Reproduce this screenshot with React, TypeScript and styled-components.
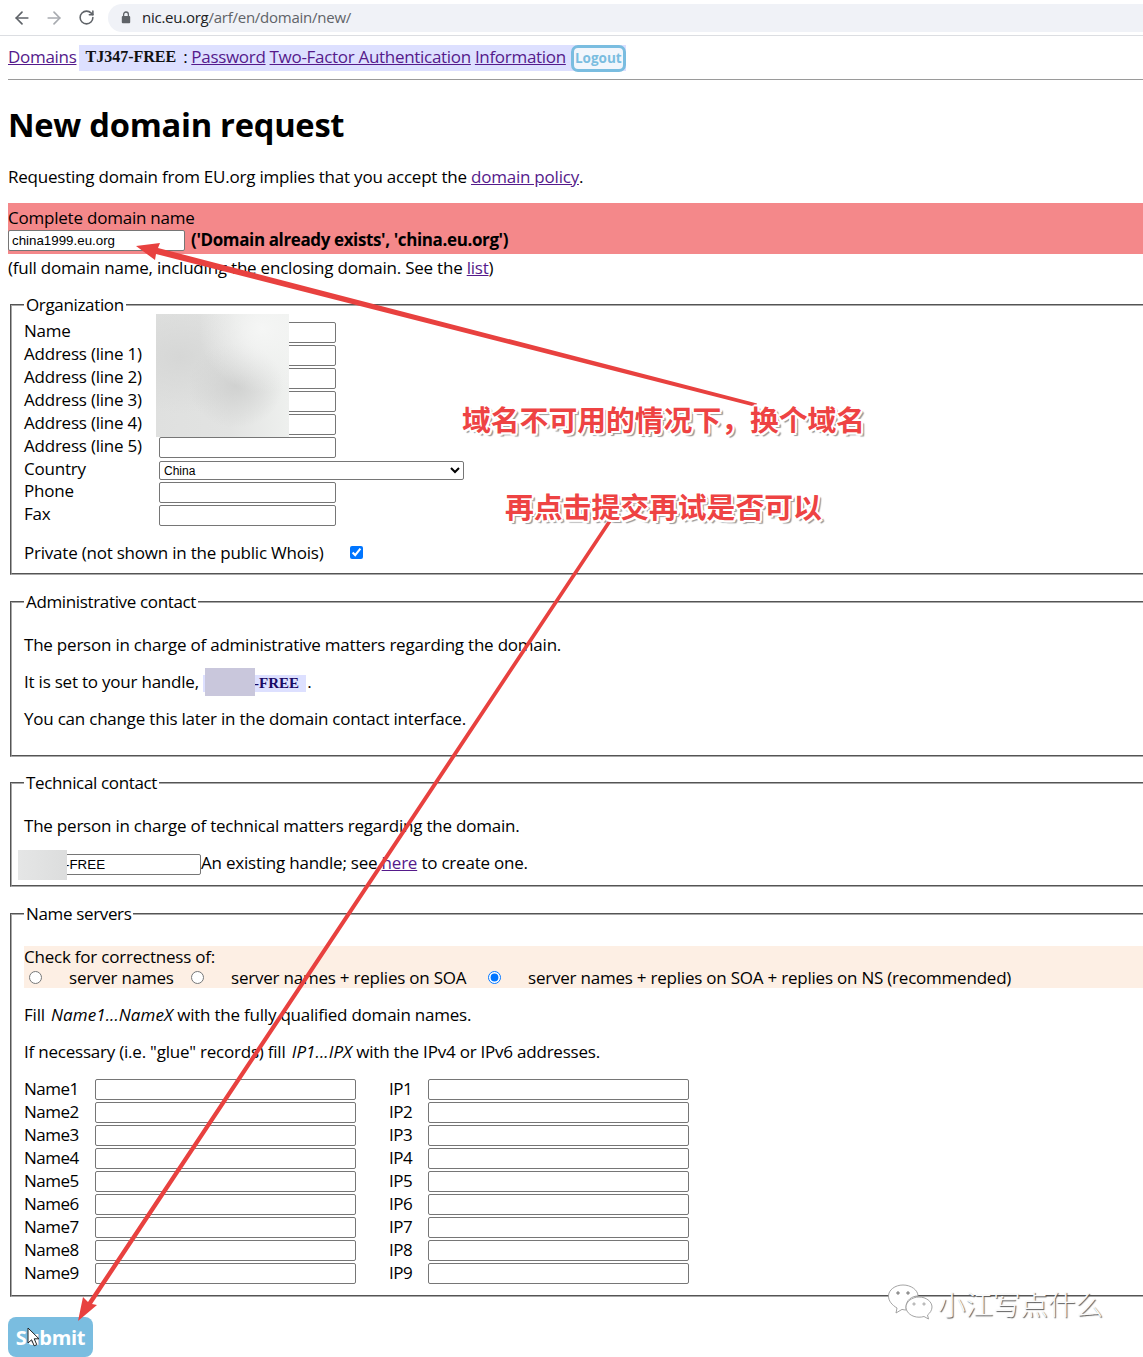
import { FC } from 'react';
import styled, { createGlobalStyle } from 'styled-components';
import { ArrowLeft, ArrowRight, RotateCw } from 'lucide-react';

const GlobalStyle = createGlobalStyle`
    html, body {
        margin: 0;
        padding: 0;
        background: #fff;
    }
    body {
        font-family: 'Open Sans', 'Noto Sans', sans-serif;
        font-size: 17px;
        line-height: 23px;
        letter-spacing: -0.22px;
        color: #000;
    }
`;

const orgLabels = ['Name', 'Address (line 1)', 'Address (line 2)', 'Address (line 3)', 'Address (line 4)', 'Address (line 5)'];
const nsRows = [1, 2, 3, 4, 5, 6, 7, 8, 9];

const App: FC = () => {
    return (
        <Viewport>
            <GlobalStyle />
            <Toolbar>
                <NavIcon><ArrowLeft size={20} strokeWidth={2} /></NavIcon>
                <NavIcon $off><ArrowRight size={20} strokeWidth={2} /></NavIcon>
                <NavIcon><RotateCw size={17} strokeWidth={2.2} /></NavIcon>
                <UrlBar>
                    <svg width='10' height='13' viewBox='0 0 10 13'>
                        <path d='M2.6 5V3.4a2.4 2.4 0 0 1 4.8 0V5' fill='none' stroke='#5f6368' strokeWidth='1.3' />
                        <rect x='0.8' y='5' width='8.4' height='7.2' rx='1' fill='#5f6368' />
                    </svg>
                    <UrlText>nic.eu.org<span>/arf/en/domain/new/</span></UrlText>
                </UrlBar>
            </Toolbar>

            <Page>
                <TopNav>
                    <a href='#'>Domains</a>
                    <UserBar>
                        <Handle>TJ347-FREE</Handle>
                        <Colon>:</Colon>
                        <a href='#'>Password</a>
                        <a href='#'>Two-Factor Authentication</a>
                        <a href='#'>Information</a>
                        <LogoutButton>Logout</LogoutButton>
                    </UserBar>
                </TopNav>
                <Rule />
                <Title>New domain request</Title>
                <Intro>
                    Requesting domain from EU.org implies that you accept the <a href='#'>domain policy</a>.
                </Intro>

                <ErrorBlock>
                    <div>Complete domain name</div>
                    <ErrorRow>
                        <TextInput $width={177} defaultValue='china1999.eu.org' />
                        <b>('Domain already exists', 'china.eu.org')</b>
                    </ErrorRow>
                </ErrorBlock>
                <Hint>
                    (full domain name, including the enclosing domain. See the <a href='#'>list</a>)
                </Hint>

                <Group $gap={14} $pb={9}>
                    <legend>Organization</legend>
                    <FormGrid>
                        {orgLabels.map((label) => (
                            <FormRow key={label}>
                                <span>{label}</span>
                                <TextInput $width={177} />
                            </FormRow>
                        ))}
                        <FormRow $h={22}>
                            <span>Country</span>
                            <CountrySelect defaultValue='China'>
                                <option>China</option>
                            </CountrySelect>
                        </FormRow>
                        <FormRow>
                            <span>Phone</span>
                            <TextInput $width={177} />
                        </FormRow>
                        <FormRow>
                            <span>Fax</span>
                            <TextInput $width={177} />
                        </FormRow>
                    </FormGrid>
                    <PrivateRow>
                        <span>Private (not shown in the public Whois)</span>
                        <input type='checkbox' defaultChecked />
                    </PrivateRow>
                </Group>

                <Group $gap={15}>
                    <legend>Administrative contact</legend>
                    <Note $top={16}>The person in charge of administrative matters regarding the domain.</Note>
                    <Note>
                        It is set to your handle, <InlineHandle>TJ347-FREE</InlineHandle> .
                    </Note>
                    <Note>You can change this later in the domain contact interface.</Note>
                    <Spacer $h={14} />
                </Group>

                <Group $gap={14}>
                    <legend>Technical contact</legend>
                    <Note $top={16}>The person in charge of technical matters regarding the domain.</Note>
                    <TechRow>
                        <TextInput $width={177} defaultValue='TJ347-FREE' />
                        <span>An existing handle; see <a href='#'>here</a> to create one.</span>
                    </TechRow>
                </Group>

                <Group $gap={15}>
                    <legend>Name servers</legend>
                    <CheckBlock>
                        <div>Check for correctness of:</div>
                        <RadioRow>
                            <RadioItem $w={162}><input type='radio' name='chk' /><span>server names</span></RadioItem>
                            <RadioItem $w={297}><input type='radio' name='chk' /><span>server names + replies on SOA</span></RadioItem>
                            <RadioItem $w={560}><input type='radio' name='chk' defaultChecked /><span>server names + replies on SOA + replies on NS (recommended)</span></RadioItem>
                        </RadioRow>
                    </CheckBlock>
                    <Note $top={15}>Fill <i>Name1...NameX</i> with the fully qualified domain names.</Note>
                    <Note>If necessary (i.e. "glue" records) fill <i>IP1...IPX</i> with the IPv4 or IPv6 addresses.</Note>
                    <ServerGrid>
                        {nsRows.map((n) => (
                            <ServerRow key={n}>
                                <span>Name{n}</span>
                                <TextInput $width={261} />
                                <span>IP{n}</span>
                                <TextInput $width={261} />
                            </ServerRow>
                        ))}
                    </ServerGrid>
                </Group>

                <SubmitButton type='button'>Submit</SubmitButton>
            </Page>

            <BlurPatch $left={156} $top={314} $w={133} $h={123} $tone='org' />
            <BlurPatch $left={205} $top={668} $w={50} $h={28} $tone='handle' />
            <BlurPatch $left={18} $top={850} $w={49} $h={30} $tone='tech' />

            <ArrowLayer viewBox='0 0 1143 1357' width='1143' height='1357'>
                <polygon points='757,403.5 158,248 160,243 136,246 155,260 156,254 756,407' fill='#e8413f' />
                <polygon points='609,519 88,1302 83,1297 78,1321 97,1305 92,1304 612,521' fill='#e8413f' />
            </ArrowLayer>

            <Callout $left={462} $top={399}>域名不可用的情况下，换个域名</Callout>
            <Callout $left={505} $top={486}>再点击提交再试是否可以</Callout>

            <Cursor width='14' height='21' viewBox='0 0 14 21'>
                <path d='M1 1v15l3.6-3.2 2.6 6 2.6-1.1-2.6-5.9h4.8z' fill='#fff' stroke='#222' strokeWidth='1' />
            </Cursor>

            <Watermark>
                <svg width='46' height='40' viewBox='0 0 46 40' fill='none' stroke='#9a9a9a' strokeWidth='0.9'>
                    <path d='M16 2c8 0 15 5 15 11-6 0-12 4-12 11 0 1 0 2 .4 3-1.500 0-3-.2-4.400-.6L9 30l1-5C5 22 1.500 18 1.500 13 1.500 7 8 2 16 2z' fill='#fff' />
                    <path d='M32 14c7 0 13 4.500 13 10 0 3-1.800 6-4.500 8l1 4-4.500-2.500c-1.600.5-3.300.7-5 .7-7 0-13-4.500-13-10S25 14 32 14z' fill='#fff' />
                    <circle cx='11' cy='10' r='1.300' fill='#888' />
                    <circle cx='21' cy='10' r='1.300' fill='#888' />
                    <circle cx='27' cy='21' r='1.100' />
                    <circle cx='37' cy='21' r='1.100' />
                </svg>
                <span>小江写点什么</span>
            </Watermark>
        </Viewport>
    );
};

export default App;

const Viewport = styled.div`
    position: relative;
    width: 1143px;
    height: 1357px;
    overflow: hidden;
`;

const Toolbar = styled.header`
    display: flex;
    align-items: center;
    height: 35px;
    padding-left: 12px;
    border-bottom: 1px solid #dcdee2;
`;

const NavIcon = styled.span<{ $off?: boolean }>`
    display: flex;
    align-items: center;
    justify-content: center;
    width: 20px;
    margin-right: 12px;
    color: ${(p) => (p.$off ? '#a8abb0' : '#5f6368')};
`;

const UrlBar = styled.div`
    display: flex;
    align-items: center;
    gap: 11px;
    flex: 1;
    height: 28px;
    padding-left: 13px;
    background: #f0f2f7;
    border-radius: 14px 0 0 14px;
`;

const UrlText = styled.div`
    font-size: 15px;
    letter-spacing: -0.25px;
    color: #202124;

    span {
        color: #5f6368;
    }
`;

const Page = styled.main`
    width: 1180px;
    padding-left: 8px;

    a {
        color: #551a8b;
    }
`;

const TopNav = styled.nav`
    display: flex;
    align-items: center;
    height: 26px;
    margin-top: 9px;
    gap: 3px;
    letter-spacing: -0.3px;

    a {
        margin-bottom: 3px;
    }
`;

const UserBar = styled.div`
    display: flex;
    align-items: center;
    height: 26px;
    padding-left: 6px;
    background: #dde0ff;

    a + a {
        margin-left: 4px;
    }
`;

const Handle = styled.code`
    font-family: 'Liberation Serif', serif;
    font-weight: 700;
    font-size: 16px;
    letter-spacing: 0;
    color: #111;
    margin-bottom: 3px;
`;

const Colon = styled.span`
    margin: 0 4px 3px 7px;
`;

const LogoutButton = styled.span`
    display: flex;
    align-items: center;
    justify-content: center;
    box-sizing: border-box;
    width: 55px;
    height: 27px;
    margin-left: 5px;
    font-size: 13.5px;
    font-weight: 700;
    letter-spacing: 0;
    color: #7abde0;
    background: #f2f6fc;
    border: 3px solid #7abde0;
    border-radius: 7px;
`;

const Rule = styled.hr`
    height: 1px;
    margin: 8px 0 0;
    border: 0;
    background: #9a9a9a;
`;

const Title = styled.h1`
    margin: 22px 0 0;
    font-size: 32.7px;
    line-height: 46px;
    font-weight: 700;
    letter-spacing: -0.27px;
`;

const Intro = styled.p`
    margin: 17px 0 0;
`;

const ErrorBlock = styled.div`
    height: 51px;
    margin-top: 15px;
    padding-top: 3px;
    box-sizing: border-box;
    background: #f4888a;
`;

const ErrorRow = styled.div`
    display: flex;
    align-items: center;
    gap: 6px;
    height: 23px;

    b {
        margin-bottom: 2px;
        letter-spacing: -0.38px;
    }
`;

const Hint = styled.p`
    margin: 2px 0 0;
`;

const Group = styled.fieldset<{ $gap?: number; $pb?: number }>`
    margin: ${(p) => p.$gap ?? 13}px 2px 0;
    padding: 4px 12px ${(p) => p.$pb ?? 11}px;
    border: 2px groove #a8a8a8;

    legend {
        padding: 0 2px;
        letter-spacing: -0.35px;
    }
`;

const FormGrid = styled.div`
    display: flex;
    flex-direction: column;
`;

const FormRow = styled.div<{ $h?: number }>`
    display: grid;
    grid-template-columns: 135px auto;
    justify-content: start;
    align-items: start;
    height: ${(p) => p.$h ?? 23}px;
    line-height: 21px;

    input {
        margin-top: 2px;
    }
`;

const TextInput = styled.input<{ $width: number }>`
    box-sizing: border-box;
    width: ${(p) => p.$width}px;
    height: 21px;
    padding: 1px 3px;
    font-family: 'Liberation Sans', Arial, sans-serif;
    font-size: 13.33px;
    letter-spacing: 0;
    background: #fff;
    border: 1px solid #767676;
    border-radius: 2px;
`;

const CountrySelect = styled.select`
    box-sizing: border-box;
    width: 305px;
    height: 19px;
    margin-top: 3px;
    padding: 0;
    font-family: 'Liberation Sans', Arial, sans-serif;
    font-size: 12px;
    letter-spacing: 0;
    background: #fff;
    border: 1px solid #767676;
    border-radius: 2px;
`;

const PrivateRow = styled.div`
    display: grid;
    grid-template-columns: 326px auto;
    align-items: center;
    margin-top: 15px;

    input {
        width: 13px;
        height: 13px;
        margin: 0;
    }
`;

const Note = styled.p<{ $top?: number }>`
    margin: ${(p) => p.$top ?? 14}px 0 0;

    i {
        margin-left: 2px;
        letter-spacing: 0.1px;
    }
`;

const Spacer = styled.div<{ $h: number }>`
    height: ${(p) => p.$h}px;
`;

const InlineHandle = styled.code`
    display: inline-block;
    margin-right: -3px;
    padding: 0 7px 0 11px;
    font-family: 'Liberation Serif', serif;
    font-weight: 700;
    font-size: 15px;
    line-height: 17px;
    letter-spacing: 0;
    color: #1a0a66;
    background: #dde0ff;
`;

const TechRow = styled.div`
    display: flex;
    align-items: center;
    height: 23px;
    margin-top: 14px;

    input {
        margin-top: 4px;
    }
`;

const CheckBlock = styled.div`
    height: 42px;
    margin-top: 17px;
    line-height: 21px;
    background: #fdefe4;
`;

const RadioRow = styled.div`
    display: flex;
`;

const RadioItem = styled.label<{ $w: number }>`
    display: flex;
    align-items: center;
    flex: 0 0 auto;
    width: ${(p) => p.$w}px;

    input {
        width: 13px;
        height: 13px;
        margin: 0 27px 0 5px;
    }
`;

const ServerGrid = styled.div`
    display: flex;
    flex-direction: column;
    margin-top: 14px;
`;

const ServerRow = styled.div`
    display: grid;
    grid-template-columns: 71px 261px 33px 39px 261px;
    align-items: start;
    height: 23px;
    line-height: 23px;

    span {
        letter-spacing: -0.5px;
    }
    input {
        margin-top: 2px;
    }
    span:nth-of-type(2) {
        grid-column: 4;
    }
    input:nth-of-type(2) {
        grid-column: 5;
    }
`;

const SubmitButton = styled.button`
    display: block;
    width: 85px;
    height: 40px;
    margin-top: 20px;
    padding: 0;
    font-family: 'Open Sans', sans-serif;
    font-size: 20px;
    font-weight: 700;
    letter-spacing: -0.3px;
    color: #fff;
    background: #7abde0;
    border: 0;
    border-radius: 8px;
`;

const tones = {
    org: 'radial-gradient(circle at 80% 12%, #f5f6f5 0, transparent 42%), radial-gradient(ellipse at 60% 58%, #d0d1d0 0, transparent 42%), radial-gradient(ellipse at 18% 35%, #d6d7d6 0, transparent 50%), linear-gradient(90deg, #dfe0df, #e2e3e2 55%, #eef0ee)',
    handle: '#c9c7dc',
    tech: 'linear-gradient(90deg, #e5e6e6, #dcdddd)',
};

const BlurPatch = styled.div<{ $left: number; $top: number; $w: number; $h: number; $tone: keyof typeof tones }>`
    position: absolute;
    left: ${(p) => p.$left}px;
    top: ${(p) => p.$top}px;
    width: ${(p) => p.$w}px;
    height: ${(p) => p.$h}px;
    background: ${(p) => tones[p.$tone]};
`;

const ArrowLayer = styled.svg`
    position: absolute;
    left: 0;
    top: 0;
    pointer-events: none;
`;

const Callout = styled.div<{ $left: number; $top: number }>`
    position: absolute;
    left: ${(p) => p.$left}px;
    top: ${(p) => p.$top}px;
    font-family: 'Noto Sans CJK SC', sans-serif;
    font-size: 28.8px;
    font-weight: 700;
    line-height: 40px;
    letter-spacing: 0;
    white-space: nowrap;
    color: #ee4343;
    text-shadow:
        2px 0 0 #fff, -2px 0 0 #fff, 0 2px 0 #fff, 0 -2px 0 #fff,
        1.500px 1.500px 0 #fff, -1.500px 1.500px 0 #fff, 1.500px -1.500px 0 #fff, -1.500px -1.500px 0 #fff,
        3px 3px 1px #9a9a9a, 3px 2px 1px #b8b8b8;
`;

const Cursor = styled.svg`
    position: absolute;
    left: 27px;
    top: 1327px;
`;

const Watermark = styled.div`
    position: absolute;
    left: 887px;
    top: 1283px;
    display: flex;
    align-items: center;
    gap: 5px;
    font-family: 'Noto Sans CJK SC', sans-serif;
    font-size: 27.5px;
    font-weight: 300;
    line-height: 40px;
    letter-spacing: 0;
    color: #fafafa;
    text-shadow: 1px 1px 1px #555;
`;
